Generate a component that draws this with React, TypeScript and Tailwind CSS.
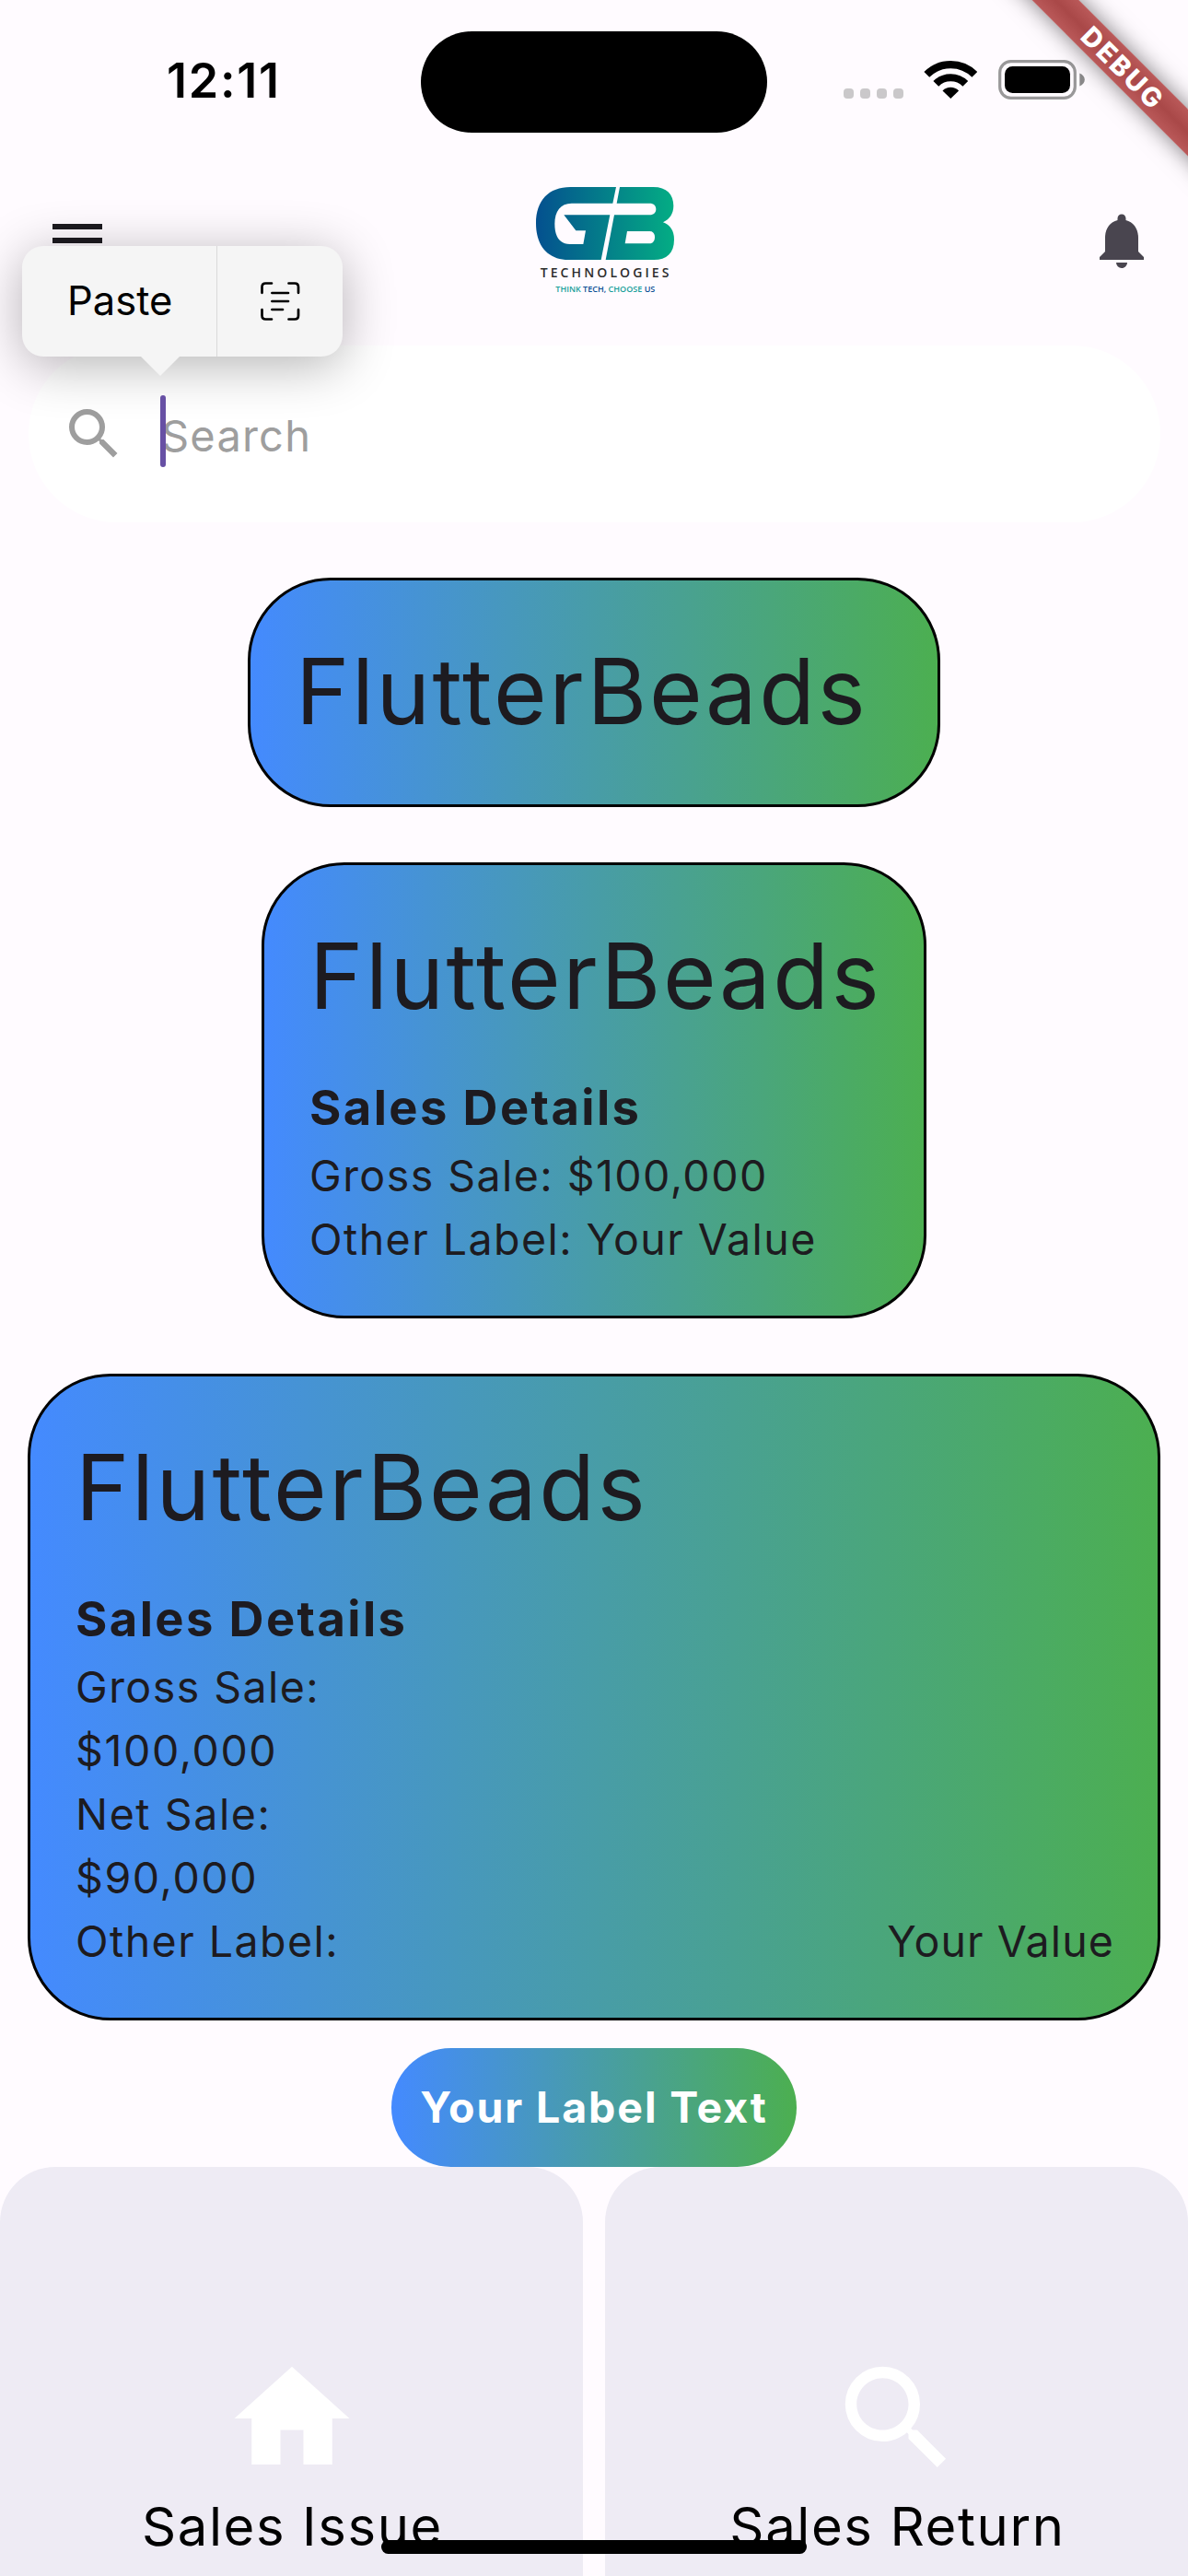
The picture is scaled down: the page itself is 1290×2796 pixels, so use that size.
import React from "react";
import { MdHome, MdMenu, MdNotifications, MdSearch } from "react-icons/md";

function WifiIcon() {
  return (
    <svg className="mt-[65px] ml-[22px] h-[43px] w-[58px]" viewBox="0 0 58 43" fill="none" stroke="#000">
      <path d="M3.3 15.9A36.7 36.7 0 0 1 55.3 15.9" strokeWidth="8.2" />
      <path d="M13.3 25.9A22.6 22.6 0 0 1 45.3 25.9" strokeWidth="8.2" />
      <path d="M29.3 41.9L20.5 33.4A12.6 12.6 0 0 1 38.1 33.4Z" fill="#000" stroke="none" />
    </svg>
  );
}

function BatteryIcon() {
  return (
    <svg className="mt-[65px] ml-[23px] h-[43px] w-[95px]" viewBox="0 0 95 43">
      <rect x="1.7" y="1.7" width="81.6" height="39.6" rx="12" fill="none" stroke="#999899" strokeWidth="3.2" />
      <rect x="7" y="7" width="71" height="29" rx="8.5" fill="#000" />
      <path d="M88.3 14.5C91.8 16 93.8 18.4 93.8 21.5S91.8 27 88.3 28.5Z" fill="#8b8a8b" />
    </svg>
  );
}

function StatusBar() {
  return (
    <div className="flex h-[177px] shrink-0 items-start">
      <span className="mt-[56px] ml-[181px] w-[276px] text-[52px] leading-[64px] font-semibold tracking-[1.76px] text-black">
        12:11
      </span>
      <div className="mt-[33.5px] h-[110.5px] w-[376px] rounded-full bg-black" />
      <div className="mt-[96px] ml-[83px] flex gap-[7px]">
        {[0, 1, 2, 3].map((dot) => (
          <span key={dot} className="h-[11px] w-[11px] rounded-[4px] bg-[#cac8ca]" />
        ))}
      </div>
      <WifiIcon />
      <BatteryIcon />
    </div>
  );
}

function Logo() {
  return (
    <svg className="ml-[440px] h-[150px] w-[200px]" viewBox="0 0 200 150">
      <defs>
        <linearGradient id="brand" gradientUnits="userSpaceOnUse" x1="66" y1="0" x2="516" y2="0">
          <stop offset="0" stopColor="#04508f" />
          <stop offset="1" stopColor="#04ad84" />
        </linearGradient>
      </defs>
      <g transform="scale(0.33333)" fill="url(#brand)">
        <path d="M327 69H178C108 69 66 112 66 187S106 306 172 306H278L307 160H157L196 211H228L220 255H176C143 255 127 230 127 189C127 148 146 122 182 122H316Z" />
        <path
          fillRule="evenodd"
          d="M339 69H448C492 69 514 93 514 130C514 156 502 174 480 184C503 193 516 210 516 240C516 284 492 306 450 306H293L321 160H436C450 160 457 152 457 141S450 122 436 122H329ZM363 213H436C448 213 453 221 453 232C453 245 447 253 436 253H356Z"
        />
      </g>
      <text x="26.7" y="121" fontSize="14" fontWeight="600" letterSpacing="3.1" fill="#2d2d2d" fontFamily="Open Sans, sans-serif">
        TECHNOLOGIES
      </text>
      <text x="43.3" y="137" fontSize="9" fontWeight="600" fontFamily="Open Sans, sans-serif" fill="#1a9f9b" textLength="108">
        THINK <tspan fill="#0d4f95">TECH,</tspan> CHOOSE <tspan fill="#0d4f95">US</tspan>
      </text>
    </svg>
  );
}

function AppBar() {
  return (
    <header className="flex h-[168px] shrink-0 items-start pl-[48px]">
      <MdMenu className="mt-[48px] h-[72px] w-[72px] text-[#1d1b20]" />
      <div className="mt-[3px] flex">
        <Logo />
      </div>
      <MdNotifications className="mt-[48px] ml-[422px] h-[72px] w-[72px] text-[#49454f]" />
    </header>
  );
}

function SearchField() {
  return (
    <div className="mt-[30px] mr-[30px] ml-[31px] flex h-[192px] shrink-0 items-center rounded-full bg-white pl-[35px]">
      <MdSearch className="h-[72px] w-[72px] text-[#9e9e9e]" />
      <span className="z-10 mb-[6px] ml-[36px] h-[78px] w-[6px] rounded-full bg-[#6750a4]" />
      <span className="mt-[3px] -ml-[5px] text-[47px] leading-[69px] tracking-[1.2px] text-[#9e9e9e]">Search</span>
    </div>
  );
}

function PasteMenu() {
  return (
    <div className="absolute top-[267px] left-[24px] h-[120px] w-[348px] rounded-[23px] bg-[#f5f5f5] shadow-[0_9px_56px_rgba(0,0,0,0.3)]">
      <div className="flex h-full">
        <div className="flex w-[212px] items-center border-r border-[#dadada] pl-[49px] text-[43.5px] text-black">
          Paste
        </div>
        <div className="flex flex-1 items-center pl-[47px]">
          <svg className="h-[42px] w-[43px]" viewBox="0 0 43 42" fill="none" stroke="#000" strokeWidth="2.7" strokeLinecap="round">
            <path d="M1.5 11.8V5.5Q1.5 1.5 5.5 1.5H12M30.5 1.5H37Q41 1.5 41 5.5V11.8M41 30.2V36.5Q41 40.5 37 40.5H30.5M12 40.5H5.5Q1.5 40.5 1.5 36.5V30.2" />
            <path d="M12.4 12H30M12.4 21H30M12.4 30H24" />
          </svg>
        </div>
      </div>
      <svg className="absolute top-full left-[129px] h-[21px] w-[42px]" viewBox="0 0 42 21">
        <path d="M0 0H42L21 21Z" fill="#f5f5f5" />
      </svg>
    </div>
  );
}

function Title() {
  return <h2 className="pl-px text-[99px] leading-[144px] tracking-[2.53px]">FlutterBeads</h2>;
}

function SalesHeading() {
  return <h3 className="mt-8 pl-px text-[52.5px] leading-[79px] font-bold tracking-[2.4px]">Sales Details</h3>;
}

function Cards() {
  return (
    <main className="flex shrink-0 flex-col items-center gap-[60px] pt-[60px] text-[46.5px] leading-[69px] tracking-[1.45px] whitespace-nowrap text-[#1d1b20]">
      <section className="h-[249px] w-[752px] rounded-[90px] border-[3px] border-black bg-linear-to-r/srgb from-[#448aff] to-[#4caf50] bg-origin-border p-[48px]">
        <Title />
      </section>
      <section className="h-[495px] w-[722px] rounded-[90px] border-[3px] border-black bg-linear-to-r/srgb from-[#448aff] to-[#4caf50] bg-origin-border p-[48px]">
        <Title />
        <SalesHeading />
        <p className="pl-px">Gross Sale: $100,000</p>
        <p className="pl-px">Other Label: Your Value</p>
      </section>
      <section className="h-[702px] w-[1230px] rounded-[90px] border-[3px] border-black bg-linear-to-r/srgb from-[#448aff] to-[#4caf50] bg-origin-border p-[48px]">
        <Title />
        <SalesHeading />
        <p className="pl-px">Gross Sale:</p>
        <p className="pl-px tracking-[1.6px]">$100,000</p>
        <p className="pl-px tracking-[1.6px]">Net Sale:</p>
        <p className="pl-px tracking-[1.6px]">$90,000</p>
        <div className="-mr-px flex justify-between pl-px">
          <span>Other Label:</span>
          <span className="tracking-[1.1px]">Your Value</span>
        </div>
      </section>
    </main>
  );
}

function Tile({ icon, label }: { icon: React.ReactNode; label: string }) {
  return (
    <div className="flex flex-1 flex-col items-center rounded-t-[60px] bg-[#eeebf4] pt-[198px]">
      {icon}
      <span className="mt-[6px] ml-[2px] text-[58px] leading-[72px] tracking-[1.6px] text-black">{label}</span>
    </div>
  );
}

function DebugBanner() {
  return (
    <div className="absolute top-0 right-0 h-[240px] w-[240px] overflow-hidden">
      <div className="absolute top-[54px] -left-[52px] flex h-[36px] w-[440px] rotate-45 items-center justify-center bg-linear-to-b/srgb from-[#ba5959] via-[#a94848] to-[#ba5959] pl-[5px] text-[29px] leading-none font-extrabold tracking-[2.6px] text-white shadow-[0_0_24px_rgba(0,0,0,0.5)]">
        DEBUG
      </div>
    </div>
  );
}

export default function App() {
  return (
    <div className="relative flex h-[2796px] w-[1290px] flex-col overflow-hidden bg-[#fffbff] font-['Inter',sans-serif]">
      <StatusBar />
      <AppBar />
      <SearchField />
      <Cards />
      <button className="mt-[30px] h-[129px] w-[440px] shrink-0 self-center rounded-full bg-linear-to-r/srgb from-[#448aff] to-[#4caf50] text-[46.5px] font-bold tracking-[1.89px] whitespace-nowrap text-white">
        Your Label Text
      </button>
      <div className="flex flex-1 gap-6">
        <Tile icon={<MdHome className="h-[150px] w-[150px] text-white" />} label="Sales Issue" />
        <Tile icon={<MdSearch className="h-[150px] w-[150px] text-white" />} label="Sales Return" />
      </div>
      <PasteMenu />
      <DebugBanner />
      <div className="absolute top-[2757px] left-[414px] h-[15px] w-[462px] rounded-full bg-black" />
    </div>
  );
}
